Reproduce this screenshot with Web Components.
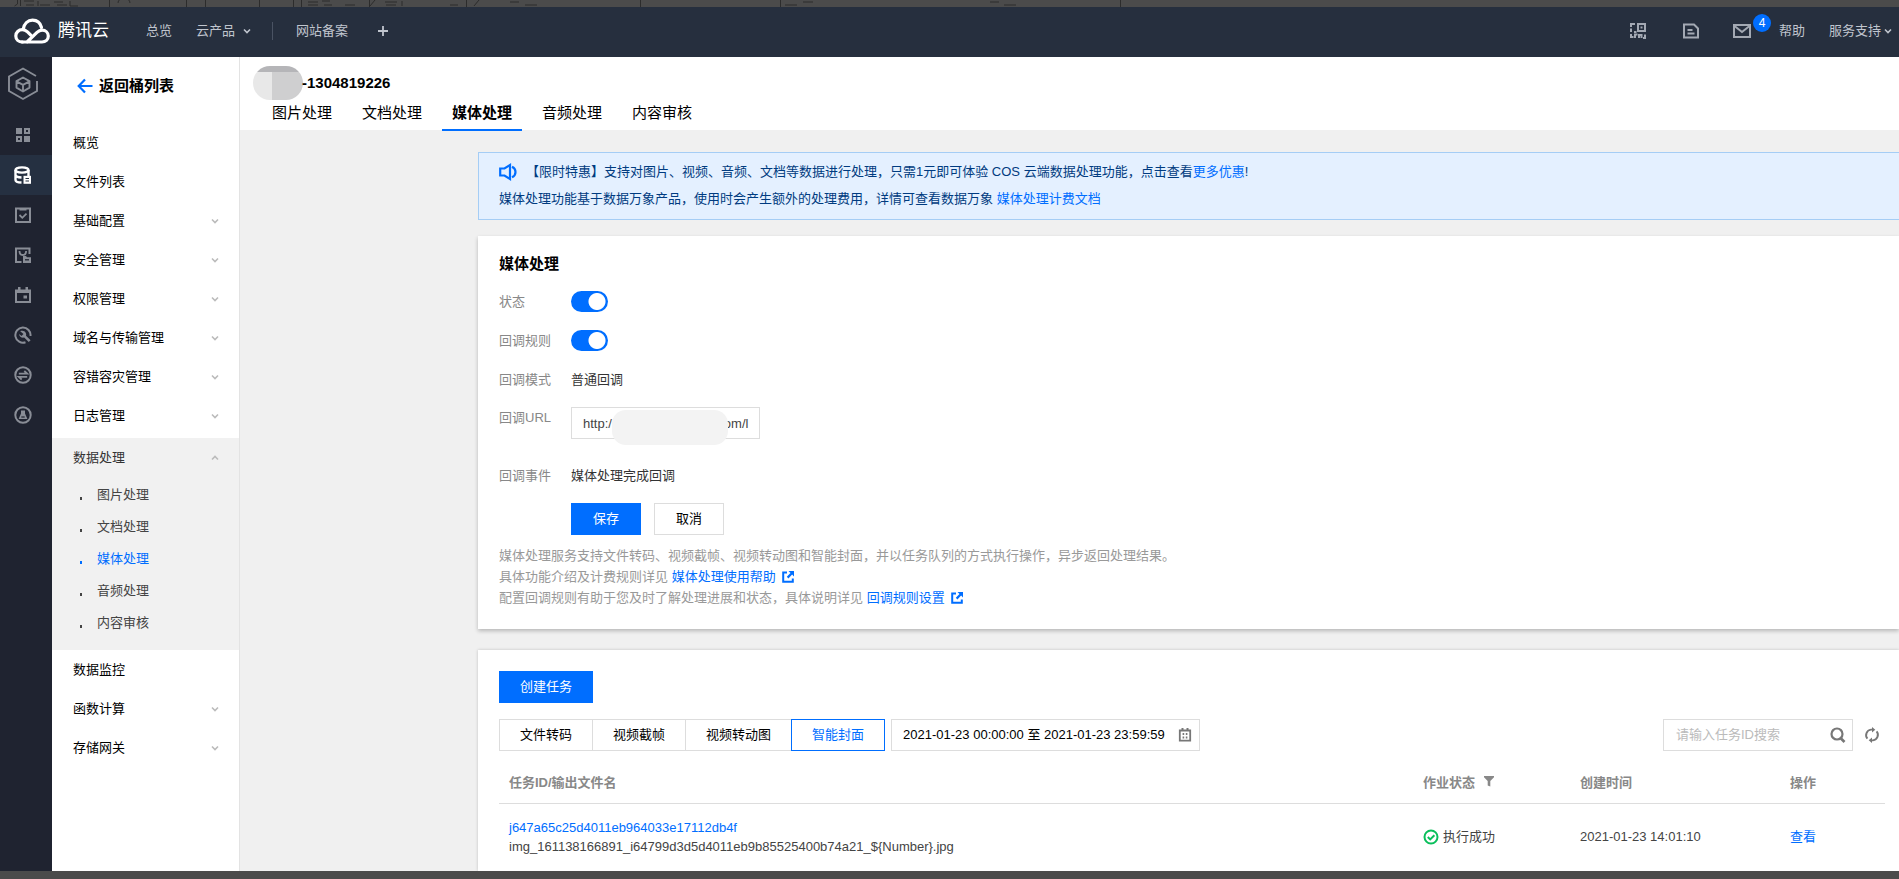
<!DOCTYPE html>
<html lang="zh-CN">
<head>
<meta charset="utf-8">
<title>媒体处理 - 对象存储 - 腾讯云</title>
<style>
  html, body { margin: 0; padding: 0; }
  body {
    --blue: #006eff;
    --line: #dddddd;
    --muted: #888888;
    font-family: "Liberation Sans", "Noto Sans CJK SC", sans-serif;
    font-size: 13px;
    line-height: 20px;
    color: #000;
    background: #4b4b4b;
  }
</style>
</head>
<body>
<cos-app></cos-app>

<script>
const ICONS = {
  cloud: ['0 0 36 26', `<g fill="none" stroke="#fff" stroke-width="3.2" stroke-linejoin="round" stroke-linecap="round"><path d="M8 24h20c3.600 0 6.300-2.500 6.300-5.900s-2.800-5.900-6.200-5.900c-2 0-3.600.8-5.100 2.200L13 24"/><path d="M8.500 24c-3.900 0-6.700-2.600-6.700-6.100s2.900-6.200 6.500-6.200c1.900 0 3.700.8 5.200 2.200l3.300 3.200"/><path d="M9.200 11.200c.9-5.200 4.600-9 9.300-9 4.500 0 7.900 3 9 7.300"/></g>`],
  down: ['0 0 10 10', `<path d="M2 3.500l3 3 3-3" fill="none" stroke="currentColor" stroke-width="1.600"/>`],
  up: ['0 0 10 10', `<path d="M2 6.500l3-3 3 3" fill="none" stroke="currentColor" stroke-width="1.600"/>`],
  plus: ['0 0 12 12', `<path d="M6 1v10M1 6h10" stroke="currentColor" stroke-width="1.800"/>`],
  qr: ['0 0 16 16', `<g fill="none" stroke="currentColor" stroke-width="2"><path d="M8 1h7v7H8z"/><path d="M5 1H1v3M1 5.500V9M4 9h2.500M1 11v3h2.500M5 15v-3.500h2.500M9 15v-3h2.500v3M13 15h2v-3.500"/></g><path d="M10.500 3.500h2v2h-2z" fill="currentColor"/>`],
  doc: ['0 0 16 16', `<path d="M1 1.500h10l4 4v9H1z" fill="none" stroke="currentColor" stroke-width="2"/><path d="M4.500 7h5M4.500 10.500h7" stroke="currentColor" stroke-width="1.800"/>`],
  mail: ['0 0 18 14', `<path d="M1 1h16v12H1zM1.500 2l7.500 6 7.500-6" fill="none" stroke="currentColor" stroke-width="2"/>`],
  hex: ['0 0 32 34', `<g fill="none" stroke="currentColor" stroke-width="1.900"><path d="M30 14v10L16 32 2 24V9.500L16 1.500l13 7.500"/><path d="M16 10.500l6.500 3.600v6.500L16 24.500l-6.500-3.900v-6.500zM9.500 14.300l6.500 3.600 6.500-3.600M16 18v6.500" stroke-linejoin="round"/></g>`],
  grid: ['0 0 16 16', `<path d="M1 1h6v6H1zM9 9h6v6H9z" fill="currentColor"/><path d="M10 2h4v4h-4zM2 10h4v4H2z" fill="none" stroke="currentColor" stroke-width="2"/>`],
  db: ['0 0 18 18', `<g fill="none" stroke="currentColor" stroke-width="2.400"><ellipse cx="8" cy="4" rx="6.500" ry="2.600"/><path d="M1.500 4v10c0 1.400 2.500 2.400 6 2.500M14.500 4v6M1.500 9c.2 1.400 2.500 2.400 6 2.500"/></g><path d="M9.500 9.800H17v8H9.500z" fill="currentColor"/><path d="M11.500 12.500h3.500M11.500 15h3.500" stroke="#253041" stroke-width="1.100"/>`],
  check: ['0 0 16 16', `<path d="M1 1.500h14V15H1z" fill="none" stroke="currentColor" stroke-width="2"/><path d="M4.500 1v2.500h7V1" fill="currentColor"/><path d="M4.500 8l2.800 2.800L11.500 6.600" fill="none" stroke="currentColor" stroke-width="1.800"/>`],
  bag: ['0 0 16 16', `<path d="M6.500 15H1V1.500h13.500V7" fill="none" stroke="currentColor" stroke-width="2"/><path d="M4.500 4c0 2.800 1.300 4 3.300 4s3.300-1.200 3.300-4" fill="none" stroke="currentColor" stroke-width="1.800"/><path d="M8 9h3l1 1.200h4V16H8z" fill="currentColor"/><path d="M10 12.800h4" stroke="#1f2330" stroke-width="1.300"/>`],
  cal: ['0 0 16 16', `<path d="M1 3.500h14V15H1z" fill="none" stroke="currentColor" stroke-width="2"/><path d="M1 3h14v3H1zM3 0h2.500v4H3zM10.500 0H13v4h-2.500zM8.500 8.500h3.500v3H8.500z" fill="currentColor"/>`],
  wrench: ['0 0 18 18', `<path d="M11.500 16.300A7.600 7.600 0 1 1 16.500 10" fill="none" stroke="currentColor" stroke-width="2"/><path d="M6.200 5.300c2-1 4.600-.4 5.600 1.600.5 1 .5 2 .2 2.900l4.600 4.400-1.900 1.900-4.500-4.500c-2.300.6-4.900-.7-5.200-3.600l2.500 2 2-2z" fill="currentColor"/>`],
  swap: ['0 0 18 18', `<circle cx="9" cy="9" r="7.700" fill="none" stroke="currentColor" stroke-width="2"/><path d="M4.800 7.700h8.400L10.300 5M13.200 10.800H4.800l2.900 2.700" fill="none" stroke="currentColor" stroke-width="1.800"/>`],
  flask: ['0 0 18 18', `<circle cx="9" cy="9" r="7.700" fill="none" stroke="currentColor" stroke-width="2"/><path d="M7 4.500h4v3l2.400 5.500H4.600L7 7.500z" fill="currentColor"/><path d="M7.300 11h3.400" stroke="#1f2330" stroke-width="1.200"/>`],
  back: ['0 0 16 16', `<path d="M8 1.500L1.700 8 8 14.500M2 8h13.500" fill="none" stroke="currentColor" stroke-width="2.200"/>`],
  horn: ['0 0 18 18', `<path d="M1.200 5.500h4.300L11 2v14l-5.500-3.500H1.200z" fill="none" stroke="currentColor" stroke-width="2.200"/><path d="M13 3.700c2.200 1 3.500 3 3.500 5.300s-1.300 4.300-3.500 5.300" fill="none" stroke="currentColor" stroke-width="2.200"/>`],
  ext: ['0 0 12 12', `<path d="M5 1.500H1.200v9.300h9.600V7.500" fill="none" stroke="currentColor" stroke-width="2"/><path d="M6.500 0H12v5.500l-1.900-1.900-3.700 3.800-1.600-1.600 3.700-3.800z" fill="currentColor"/>`],
  date: ['0 0 14 14', `<path d="M1.800 2.500h10.400v10.200H1.800z" fill="none" stroke="currentColor" stroke-width="1.800"/><path d="M3.500 0h2v3h-2zM8.500 0h2v3h-2z" fill="currentColor"/><path d="M4.600 6h1.600M7.800 6h1.600M4.600 9.500h1.600M7.800 9.500h1.600" stroke="currentColor" stroke-width="1.800"/>`],
  search: ['0 0 16 16', `<circle cx="7" cy="7" r="5.500" fill="none" stroke="currentColor" stroke-width="2.200"/><path d="M10.500 11l4 4" stroke="currentColor" stroke-width="2.600"/>`],
  refresh: ['0 0 16 16', `<path d="M8.500 2.600H7A5.500 5.500 0 0 0 3.400 11.600M7.500 13.400H9A5.500 5.500 0 0 0 12.600 4.400" fill="none" stroke="currentColor" stroke-width="1.900"/><path d="M8 0l3.300 2.700L8 5.400zM8 10.600v5.400L4.700 13.300z" fill="currentColor"/>`],
  filter: ['0 0 12 12', `<path d="M1 1h10v1.200L7.300 6v5.500l-2.600-1V6L1 2.200z" fill="currentColor"/>`],
  ok: ['0 0 16 16', `<circle cx="8" cy="8" r="6.500" fill="none" stroke="currentColor" stroke-width="2"/><path d="M4.800 8l2.400 2.400 4.200-4.200" fill="none" stroke="currentColor" stroke-width="2"/>`]
};

function define(name, html) {
  const tpl = document.createElement('template');
  tpl.innerHTML = html;
  customElements.define(name, class extends HTMLElement {
    constructor() {
      super();
      this.attachShadow({ mode: 'open' }).append(tpl.content.cloneNode(true));
    }
  });
}

/* <cos-icon name size> : one glyph of the icon set, coloured by currentColor */
customElements.define('cos-icon', class extends HTMLElement {
  connectedCallback() {
    if (this.shadowRoot) return;
    const [box, body] = ICONS[this.getAttribute('name')];
    const [, , w, h] = box.split(' ').map(Number);
    const width = Number(this.getAttribute('size')) || w;
    this.attachShadow({ mode: 'open' }).innerHTML =
      `<style>:host{display:inline-flex;flex:none}svg{display:block}</style>
       <svg width="${width}" height="${Math.round(width * h / w)}" viewBox="${box}" aria-hidden="true">${body}</svg>`;
  }
});

/* The dimmed edge of the toolbar above the page */
define('cos-edge', `
<style>
  :host { display: block; height: 7px; overflow: hidden; }
  svg { display: block; }
</style>
<svg width="1400" height="7" aria-hidden="true">
  <g stroke="#2c2c2c" stroke-width="1" fill="none">
    <path d="M17.500 0v4l-3 2M20.500 0v6M109.500 0v7M186.500 0v7M205.500 0v7M259.500 0v7M293.500 0v7M301.500 0v7M369.500 0v7M466.500 0v7M640.500 0v7M780.500 0v7M1120.500 0v7"/>
    <path d="M118 3a6 5 0 0 1 12 0M24 1h10M26 5h8M38 1v5M40 5h10M54 2h9M57 5h10M70 1v5h8M308 2h10M308 5h10M322 1h8M324 5h8M345 5h10M370 6l5-6M385 2h12M386 5h10M402 1v5M450 5h8M474 6l5-6M510 2h9M525 5h12M785 5h12M803 2h10M990 2h9M1004 5h12"/>
  </g>
</svg>`);

define('cos-header', `
<style>
  :host { display: flex; align-items: center; box-sizing: border-box; height: 50px; padding-bottom: 2px; background: #262f3e; color: #c0c5ce; }
  a { color: inherit; text-decoration: none; display: flex; align-items: center; }
  .brand { color: #fff; font-size: 17px; gap: 8px; padding-left: 14px; }
  nav { display: flex; align-items: center; }
  .left { margin-left: 37px; gap: 24px; flex: 1; }
  .left a, .right a { gap: 7px; }
  .sep { width: 1px; height: 18px; background: #4a5363; margin: 0 -1px 0 -4px; }
  .plus { margin-left: 5px; }
  .right { padding-right: 6px; }
  .icon { color: #a3a9b3; }
  .doc { margin-left: 37px; }
  .mail { margin-left: 34px; position: relative; }
  .badge { position: absolute; left: 20px; top: -10px; width: 18px; height: 18px; line-height: 18px; border-radius: 9px; background: var(--blue); color: #fff; font-size: 12px; text-align: center; }
  .help { margin-left: 28px; }
  .right .support { margin-left: 24px; gap: 2px; }
</style>
<a class="brand" href="#"><cos-icon name="cloud"></cos-icon><span>腾讯云</span></a>
<nav class="left">
  <a href="#">总览</a>
  <a href="#">云产品 <cos-icon name="down"></cos-icon></a>
  <span class="sep"></span>
  <a href="#">网站备案</a>
  <a href="#" class="plus" aria-label="添加"><cos-icon name="plus"></cos-icon></a>
</nav>
<nav class="right">
  <a href="#" class="icon" aria-label="小程序"><cos-icon name="qr"></cos-icon></a>
  <a href="#" class="icon doc" aria-label="备案"><cos-icon name="doc"></cos-icon></a>
  <a href="#" class="icon mail" aria-label="消息"><cos-icon name="mail"></cos-icon><span class="badge">4</span></a>
  <a href="#" class="help">帮助</a>
  <a href="#" class="support">服务支持 <cos-icon name="down"></cos-icon></a>
</nav>`);

define('cos-rail', `
<style>
  :host { display: block; width: 52px; flex: none; background: #1f2330; color: #898d96; }
  a { display: flex; align-items: center; justify-content: center; height: 40px; padding-right: 7px; color: inherit; }
  .logo { height: 54px; margin-bottom: 4px; }
  .on { background: #253041; color: #fff; }
</style>
<a href="#" class="logo" aria-label="对象存储"><cos-icon name="hex"></cos-icon></a>
<a href="#" aria-label="概览"><cos-icon name="grid"></cos-icon></a>
<a href="#" class="on" aria-label="存储桶列表"><cos-icon name="db"></cos-icon></a>
<a href="#" aria-label="应用集成"><cos-icon name="check"></cos-icon></a>
<a href="#" aria-label="资源包"><cos-icon name="bag"></cos-icon></a>
<a href="#" aria-label="日程"><cos-icon name="cal"></cos-icon></a>
<a href="#" aria-label="工具"><cos-icon name="wrench"></cos-icon></a>
<a href="#" aria-label="迁移"><cos-icon name="swap"></cos-icon></a>
<a href="#" aria-label="实验室"><cos-icon name="flask"></cos-icon></a>`);

/* <nav-item icon="down|up"> : a first-level entry of the side menu */
customElements.define('nav-item', class extends HTMLElement {
  connectedCallback() {
    if (this.shadowRoot) return;
    const icon = this.getAttribute('icon');
    this.attachShadow({ mode: 'open' }).innerHTML = `
      <style>
        :host { display: block; }
        a { display: flex; align-items: center; justify-content: space-between; height: 39px; padding: 0 19px 0 21px; color: inherit; text-decoration: none; }
        cos-icon { color: #bbb; }
      </style>
      <a href="#"><slot></slot>${icon ? `<cos-icon name="${icon}"></cos-icon>` : ''}</a>`;
  }
});

define('cos-menu', `
<style>
  :host { display: block; width: 187px; flex: none; background: #fff; border-right: 1px solid #e3e3e3; }
  .back { display: flex; align-items: center; gap: 6px; height: 57px; padding-left: 25px; margin-bottom: 9px; font-size: 15px; font-weight: bold; color: #000; text-decoration: none; }
  .back cos-icon { color: var(--blue); }
  .group { margin-top: 3px; padding: 0 0 11px; background: #f1f1f1; color: #333; }
  ul { list-style: none; margin: 2px 0 0; padding: 0; }
  li a { display: flex; align-items: center; height: 32px; padding-left: 28px; gap: 15px; color: #444; text-decoration: none; }
  li a::before { content: ""; width: 2px; height: 3px; margin-top: 7px; background: currentColor; }
  li a.on { color: var(--blue); }
</style>
<a class="back" href="#"><cos-icon name="back"></cos-icon>返回桶列表</a>
<nav>
  <nav-item>概览</nav-item>
  <nav-item>文件列表</nav-item>
  <nav-item icon="down">基础配置</nav-item>
  <nav-item icon="down">安全管理</nav-item>
  <nav-item icon="down">权限管理</nav-item>
  <nav-item icon="down">域名与传输管理</nav-item>
  <nav-item icon="down">容错容灾管理</nav-item>
  <nav-item icon="down">日志管理</nav-item>
  <div class="group">
    <nav-item icon="up">数据处理</nav-item>
    <ul>
      <li><a href="#">图片处理</a></li>
      <li><a href="#">文档处理</a></li>
      <li><a href="#" class="on">媒体处理</a></li>
      <li><a href="#">音频处理</a></li>
      <li><a href="#">内容审核</a></li>
    </ul>
  </div>
  <nav-item>数据监控</nav-item>
  <nav-item icon="down">函数计算</nav-item>
  <nav-item icon="down">存储网关</nav-item>
</nav>`);

define('cos-page-head', `
<style>
  :host { display: block; background: #fff; padding: 11px 0 0 13px; height: 62px; }
  h1 { display: flex; align-items: center; margin: 0; height: 30px; font-size: 15px; }
  .mask { width: 50px; height: 34px; margin: 0 -1px 0 0; border-radius: 17px; background: linear-gradient(#b5b5b8 6px, transparent 6px), linear-gradient(90deg, #e8e8e8 19px, #cfcfd0 19px); }
  nav { display: flex; gap: 10px; padding-left: 9px; font-size: 15px; }
  a { padding: 0 10px 1px; line-height: 30px; border-bottom: 2px solid transparent; color: #000; text-decoration: none; }
  .on { font-weight: bold; border-color: var(--blue); }
</style>
<h1><span class="mask"></span>-1304819226</h1>
<nav>
  <a href="#">图片处理</a><a href="#">文档处理</a><a href="#" class="on">媒体处理</a><a href="#">音频处理</a><a href="#">内容审核</a>
</nav>`);

define('cos-notice', `
<style>
  :host { display: block; margin: 22px 0 16px; padding: 5px 20px 7px; border: 1px solid #a5cdf5; border-right: 0; background: #e4f0ff; color: #003b80; line-height: 27px; }
  p { display: flex; align-items: center; margin: 0; }
  cos-icon { color: var(--blue); margin-right: 9px; }
  a { color: var(--blue); text-decoration: none; }
</style>
<p><cos-icon name="horn"></cos-icon><span>【限时特惠】支持对图片、视频、音频、文档等数据进行处理，只需1元即可体验 COS 云端数据处理功能，点击查看<a href="#">更多优惠</a>!</span></p>
<p><span>媒体处理功能基于数据万象产品，使用时会产生额外的处理费用，详情可查看数据万象 <a href="#">媒体处理计费文档</a></span></p>`);

define('cos-card', `
<style>
  :host { display: block; background: #fff; box-shadow: 0 2px 4px rgba(0, 0, 0, .24); padding: 0 14px 0 21px; }
</style>
<slot></slot>`);

define('cos-button', `
<style>
  :host { display: inline-block; }
  button { box-sizing: border-box; min-width: 70px; height: 32px; padding: 0 20px; border: 1px solid var(--line); background: #fff; color: #000; font: inherit; }
  :host([primary]) button { background: var(--blue); border-color: var(--blue); color: #fff; }
</style>
<button type="button"><slot></slot></button>`);

define('cos-media-form', `
<style>
  :host { display: block; padding: 18px 0 21px; }
  h2 { margin: 0 0 8px; font-size: 15px; line-height: 20px; }
  .row { display: flex; align-items: center; min-height: 39px; color: #333; }
  .row > :first-child { width: 72px; flex: none; color: var(--muted); }
  .row.url { align-items: flex-start; padding: 8px 0 17px; min-height: 32px; }
  .url label { padding-top: 1px; }
  input[type=checkbox] { appearance: none; width: 37px; height: 21px; margin: 0; border-radius: 11px; background: radial-gradient(circle 9px at 26px 50%, #fff 8px, transparent 9px), var(--blue); }
  .field { position: relative; }
  input[type=text] { box-sizing: border-box; display: block; width: 189px; height: 32px; padding: 0 10px 0 11px; border: 1px solid var(--line); background: #fff; color: #444; font: inherit; }
  .mask { position: absolute; left: 41px; top: 3px; width: 116px; height: 35px; border-radius: 14px; background: #f3f3f3; }
  .actions { display: flex; gap: 13px; padding: 8px 0 10px 72px; }
  p { margin: 0; line-height: 21px; color: #999; }
  a { color: var(--blue); text-decoration: none; }
  a cos-icon { margin-left: 3px; vertical-align: -2px; }
</style>
<h2>媒体处理</h2>
<div class="row"><label for="status">状态</label><input type="checkbox" id="status" checked></div>
<div class="row"><label for="rule">回调规则</label><input type="checkbox" id="rule" checked></div>
<div class="row"><span>回调模式</span><span>普通回调</span></div>
<div class="row url"><label for="url">回调URL</label><div class="field"><input type="text" id="url" value="http:/                               om/l"><span class="mask"></span></div></div>
<div class="row"><span>回调事件</span><span>媒体处理完成回调</span></div>
<div class="actions"><cos-button primary>保存</cos-button><cos-button>取消</cos-button></div>
<p>媒体处理服务支持文件转码、视频截帧、视频转动图和智能封面，并以任务队列的方式执行操作，异步返回处理结果。</p>
<p>具体功能介绍及计费规则详见 <a href="#">媒体处理使用帮助 <cos-icon name="ext"></cos-icon></a></p>
<p>配置回调规则有助于您及时了解处理进展和状态，具体说明详见 <a href="#">回调规则设置 <cos-icon name="ext"></cos-icon></a></p>`);

define('cos-toolbar', `
<style>
  :host { display: flex; align-items: center; height: 32px; margin-top: 16px; color: #777; }
  button { font: inherit; }
  .seg { display: flex; }
  .seg button { box-sizing: border-box; height: 32px; padding: 0 20px; border: 1px solid var(--line); border-right: 0; background: #fff; color: #000; }
  .seg button.on { border: 1px solid var(--blue); color: var(--blue); }
  .box { box-sizing: border-box; display: flex; align-items: center; height: 32px; border: 1px solid var(--line); }
  .box input { flex: 1; min-width: 0; padding: 0; border: 0; outline: 0; background: none; color: #000; font: inherit; }
  .box input::placeholder { color: #bbb; }
  .date { width: 309px; margin-left: 6px; padding: 0 7px 0 11px; }
  .search { width: 190px; margin-left: auto; padding: 0 6px 0 12px; }
  .plain { display: flex; padding: 0; border: 0; background: none; color: inherit; }
  .refresh { margin: 0 5px 0 11px; }
</style>
<div class="seg" role="group" aria-label="任务类型">
  <button type="button">文件转码</button><button type="button">视频截帧</button><button type="button">视频转动图</button><button type="button" class="on">智能封面</button>
</div>
<div class="box date"><input type="text" aria-label="时间范围" readonly value="2021-01-23 00:00:00 至 2021-01-23 23:59:59"><cos-icon name="date"></cos-icon></div>
<div class="box search"><input type="text" aria-label="任务ID" placeholder="请输入任务ID搜索"><button type="button" class="plain" aria-label="搜索"><cos-icon name="search"></cos-icon></button></div>
<button type="button" class="plain refresh" aria-label="刷新"><cos-icon name="refresh"></cos-icon></button>`);

define('cos-tasks', `
<style>
  :host { display: block; margin-top: 12px; }
  table { width: 100%; border-collapse: collapse; table-layout: fixed; text-align: left; }
  th, td { box-sizing: border-box; padding: 0 10px; }
  th { height: 40px; border-bottom: 1px solid var(--line); color: var(--muted); font-weight: bold; }
  td { padding: 14px 10px; color: #444; line-height: 19px; }
  .status { width: 157px; }
  .time { width: 210px; }
  .action { width: 105px; }
  a { color: var(--blue); text-decoration: none; }
  .id a { display: block; }
  .ok { display: flex; align-items: center; gap: 4px; }
  .ok cos-icon { color: #0abf5b; }
  th cos-icon { margin-left: 8px; }
</style>
<table>
  <thead><tr><th class="id">任务ID/输出文件名</th><th class="status">作业状态<cos-icon name="filter"></cos-icon></th><th class="time">创建时间</th><th class="action">操作</th></tr></thead>
  <tbody><tr>
    <td class="id"><a href="#">j647a65c25d4011eb964033e17112db4f</a>img_161138166891_i64799d3d5d4011eb9b85525400b74a21_\${Number}.jpg</td>
    <td><span class="ok"><cos-icon name="ok"></cos-icon>执行成功</span></td>
    <td>2021-01-23 14:01:10</td>
    <td><a href="#">查看</a></td>
  </tr></tbody>
</table>`);

define('cos-app', `
<style>
  :host { display: flex; flex-direction: column; box-sizing: border-box; min-height: 100vh; padding-bottom: 8px; }
  .body { display: flex; flex: 1; }
  main { display: flex; flex-direction: column; flex: 1; min-width: 0; background: #f0f0f0; }
  .content { display: flex; flex-direction: column; flex: 1; margin-left: 238px; }
  .tasks { flex: 1; margin-top: 21px; padding-top: 21px; box-shadow: 0 0 3px rgba(0, 0, 0, .2); clip-path: inset(-4px -4px 0 -4px); }
</style>
<cos-edge></cos-edge>
<cos-header></cos-header>
<div class="body">
  <cos-rail></cos-rail>
  <cos-menu></cos-menu>
  <main>
    <cos-page-head></cos-page-head>
    <div class="content">
      <cos-notice></cos-notice>
      <cos-card><cos-media-form></cos-media-form></cos-card>
      <cos-card class="tasks">
        <cos-button primary>创建任务</cos-button>
        <cos-toolbar></cos-toolbar>
        <cos-tasks></cos-tasks>
      </cos-card>
    </div>
  </main>
</div>`);
</script>
</body>
</html>
